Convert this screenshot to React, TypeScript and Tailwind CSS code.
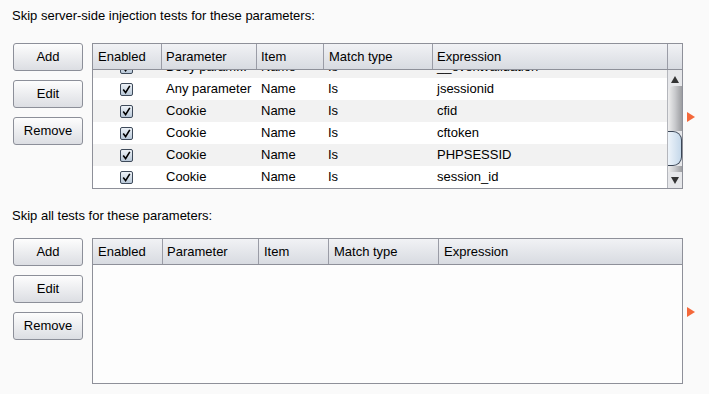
import React from 'react';

type Row = { param: string; item: string; match: string; expr: string };

const rows: Row[] = [
  { param: 'Body param...', item: 'Name', match: 'Is', expr: '__eventvalidation' },
  { param: 'Any parameter', item: 'Name', match: 'Is', expr: 'jsessionid' },
  { param: 'Cookie', item: 'Name', match: 'Is', expr: 'cfid' },
  { param: 'Cookie', item: 'Name', match: 'Is', expr: 'cftoken' },
  { param: 'Cookie', item: 'Name', match: 'Is', expr: 'PHPSESSID' },
  { param: 'Cookie', item: 'Name', match: 'Is', expr: 'session_id' },
];

function Button({ label }: { label: string }) {
  return (
    <button className="h-[28px] w-[70px] rounded-[3px] border border-[#8c8f99] bg-gradient-to-b from-[#fdfdfd] to-[#dcdee3] text-[13px] text-black">
      {label}
    </button>
  );
}

function Buttons() {
  return (
    <div className="flex w-[70px] shrink-0 flex-col gap-[9px]">
      <Button label="Add" />
      <Button label="Edit" />
      <Button label="Remove" />
    </div>
  );
}

function Checkbox() {
  return (
    <div className="flex h-[13px] w-[13px] items-center justify-center rounded-[2px] border border-[#3e4a5a] bg-gradient-to-b from-[#edf2f7] to-[#b9c8d8]">
      <svg width="9" height="9" viewBox="0 0 9 9">
        <path d="M1.2 4.6 L3.6 7.6 L7.8 0.8" fill="none" stroke="#000" strokeWidth="1.6" />
      </svg>
    </div>
  );
}

function Marker() {
  return (
    <div className="ml-[4px] mt-[2px] h-0 w-0 border-y-[5px] border-l-[8px] border-y-transparent border-l-[#f4683a]" />
  );
}

function HeaderCell({ w, label, pl = 'pl-[4px]', last }: { w: string; label: string; pl?: string; last?: boolean }) {
  return (
    <div className={`${w} ${pl} ${last ? '' : 'border-r border-[#9a9ca6]'} flex h-full shrink-0 items-center overflow-hidden whitespace-nowrap`}>
      {label}
    </div>
  );
}

function Scrollbar() {
  return (
    <div className="flex w-[15px] shrink-0 flex-col border-l border-[#b4b6bc] bg-[#e6e7ea]">
      <div className="flex h-[16px] items-center justify-center">
        <div className="mt-[2px] h-0 w-0 border-x-[4px] border-b-[7px] border-x-transparent border-b-[#333]" />
      </div>
      <div className="flex flex-1 flex-col">
        <div className="h-[45px] rounded-tl-[6px] bg-gradient-to-r from-[#efefef] via-[#c9cacd] to-[#9c9da1]" />
        <div className="h-[35px] rounded-r-[9px] border border-l-0 border-[#3b4656] bg-gradient-to-r from-[#eef4fa] to-[#c5d8ea]" />
        <div className="flex-1 bg-gradient-to-r from-[#efefef] via-[#c9cacd] to-[#9c9da1]" />
      </div>
      <div className="flex h-[16px] items-center justify-center">
        <div className="h-0 w-0 border-x-[4px] border-t-[7px] border-x-transparent border-t-[#333]" />
      </div>
    </div>
  );
}

function FilledTable() {
  return (
    <div className="flex h-[146px] w-[591px] shrink-0 flex-col border border-[#8e9099] bg-white">
      <div className="flex h-[26px] shrink-0 border-b border-[#8e9099] bg-gradient-to-b from-[#f1f2f5] to-[#d8dbe1]">
        <HeaderCell w="w-[69px]" label="Enabled" pl="pl-[5px]" />
        <HeaderCell w="w-[95px]" label="Parameter" />
        <HeaderCell w="w-[67px]" label="Item" />
        <HeaderCell w="w-[109px]" label="Match type" pl="pl-[5px]" />
        <HeaderCell w="w-[235px]" label="Expression" />
        <div className="flex-1" />
      </div>
      <div className="flex min-h-0 flex-1 overflow-hidden">
        <div className="w-[574px] shrink-0 overflow-hidden">
          <div className="-mt-[14px]">
            {rows.map((r, i) => (
              <div key={i} className={`flex h-[22px] items-center whitespace-nowrap ${i % 2 === 0 ? 'bg-[#f2f2f2]' : 'bg-white'}`}>
                <div className="flex w-[69px] shrink-0 justify-center pr-[2px]">
                  <Checkbox />
                </div>
                <div className="w-[95px] shrink-0 overflow-hidden pl-[4px]">{r.param}</div>
                <div className="w-[67px] shrink-0 pl-[4px]">{r.item}</div>
                <div className="w-[109px] shrink-0 pl-[4px]">{r.match}</div>
                <div className="flex-1 pl-[4px]">{r.expr}</div>
              </div>
            ))}
          </div>
        </div>
        <Scrollbar />
      </div>
    </div>
  );
}

function EmptyTable() {
  return (
    <div className="flex h-[146px] w-[591px] shrink-0 flex-col border border-[#8e9099] bg-[#fdfdfd]">
      <div className="flex h-[26px] shrink-0 border-b border-[#8e9099] bg-gradient-to-b from-[#f1f2f5] to-[#d8dbe1]">
        <HeaderCell w="w-[70px]" label="Enabled" pl="pl-[5px]" />
        <HeaderCell w="w-[96px]" label="Parameter" />
        <HeaderCell w="w-[70px]" label="Item" pl="pl-[5px]" />
        <HeaderCell w="w-[110px]" label="Match type" pl="pl-[5px]" />
        <HeaderCell w="flex-1" label="Expression" pl="pl-[5px]" last />
      </div>
      <div className="flex-1" />
    </div>
  );
}

export default function App() {
  return (
    <div
      className="h-[394px] w-[709px] overflow-hidden bg-[#fafafa] text-[13px] leading-[16px] text-black"
      style={{ fontFamily: '"Liberation Sans", Arial, sans-serif' }}
    >
      <div className="pl-[12px] pt-[8px]">Skip server-side injection tests for these parameters:</div>
      <div className="mt-[19px] flex items-center pl-[13px]">
        <div className="flex items-start gap-[9px] self-start">
          <Buttons />
          <FilledTable />
        </div>
        <Marker />
      </div>

      <div className="mt-[19px] pl-[12px]">Skip all tests for these parameters:</div>
      <div className="mt-[14px] flex items-center pl-[13px]">
        <div className="flex items-start gap-[9px] self-start">
          <Buttons />
          <EmptyTable />
        </div>
        <Marker />
      </div>
    </div>
  );
}
